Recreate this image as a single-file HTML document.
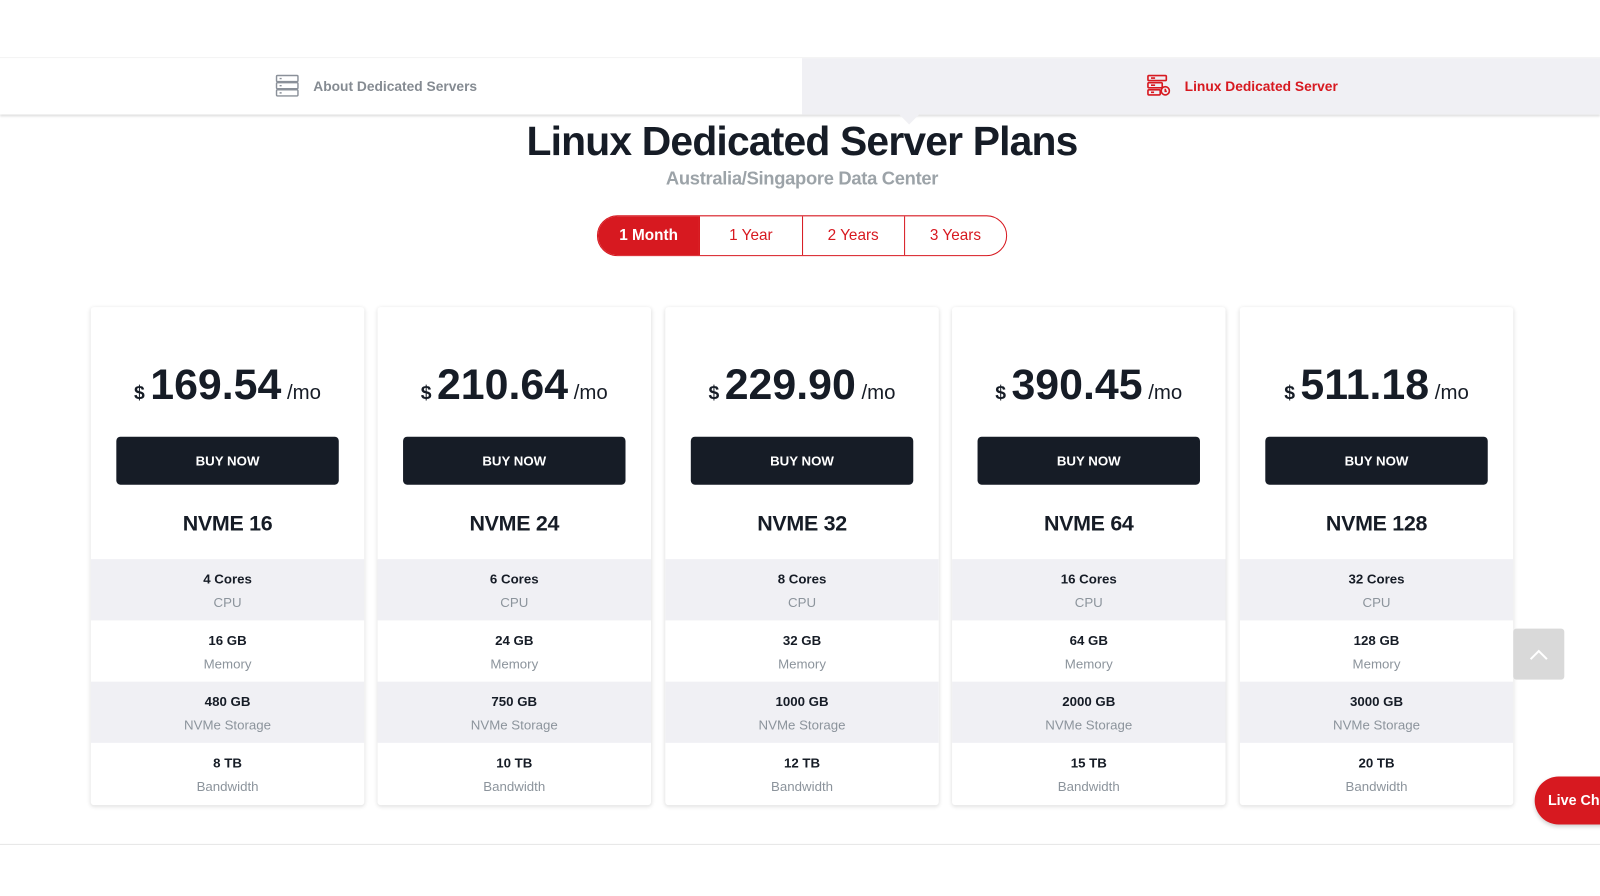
<!DOCTYPE html>
<html><head><meta charset="utf-8">
<style>
*{margin:0;padding:0;box-sizing:border-box}
html,body{width:1600px;height:896px;overflow:hidden;background:#fff}
body{font-family:"Liberation Sans",sans-serif;color:#161c26}
#w{position:absolute;left:0;top:0;width:1568px;height:878px;transform:scale(1.0204);transform-origin:0 0}
.tabs{position:absolute;top:56px;left:0;width:1568px;height:56px;border-top:1px solid #f2f2f2;box-shadow:0 2px 2px rgba(0,0,0,.12)}
.tl{position:absolute;left:0;top:0;width:786px;height:55px;background:#fff}
.tr{position:absolute;left:786px;top:0;width:782px;height:55px;background:#f0f0f4}
.tab{position:absolute;top:16px;font-size:13.5px;font-weight:bold;display:flex;align-items:center;gap:14px}
.arrow{position:absolute;left:880px;top:111px;width:0;height:0;border-left:11px solid transparent;border-right:11px solid transparent;border-top:11px solid #f0f0f4}
h1{position:absolute;top:117px;left:0;width:1572px;text-align:center;font-size:40px;font-weight:bold;letter-spacing:-.8px}
.sub{position:absolute;top:165px;left:0;width:1572px;text-align:center;font-size:18px;font-weight:bold;color:#9ca3a8;letter-spacing:-.3px}
.sw{position:absolute;left:585px;top:211px;width:402px;height:40px;border:1px solid #d71920;border-radius:20px;display:flex;overflow:hidden}
.sw div{flex:1;text-align:center;line-height:38px;font-size:15px;color:#d71920;border-left:1px solid #d71920}
.sw div:first-child{border-left:none;background:#d71920;color:#fff;font-weight:bold}
.card{position:absolute;top:301px;width:268px;height:488px;background:#fff;box-shadow:0 1px 4px rgba(0,0,0,.14);border-radius:3px;overflow:hidden;text-align:center}
.price{position:absolute;top:52px;left:0;width:100%;font-weight:bold;white-space:nowrap}
.price .d{font-size:19px}.price .n{font-size:42px}.price .m{font-size:20px;font-weight:normal}
.btn{position:absolute;top:127px;left:25px;width:218px;height:47px;background:#161c26;border-radius:4px;color:#fff;font-weight:bold;font-size:13px;line-height:47px}
.name{position:absolute;top:201px;width:100%;font-size:21px;font-weight:bold;letter-spacing:-.3px}
.row{position:absolute;left:0;width:100%;height:60px}
.row b{display:block;font-size:13px;padding-top:12px}
.row span{display:block;font-size:13px;color:#8c949c;padding-top:8px}
.g{background:#f0f0f4}
.up{position:absolute;left:1483px;top:616px;width:50px;height:50px;background:#d9d9d9;border-radius:3px}
.chat{position:absolute;left:1504px;top:761px;width:120px;height:47px;background:#d71920;border-radius:24px;color:#fff;font-weight:bold;font-size:14px;line-height:47px;padding-left:13px;box-shadow:0 2px 4px rgba(0,0,0,.2)}
.bl{position:absolute;top:827px;left:0;width:1568px;height:1px;background:#e6e6e6}
</style></head><body><div id="w">
<div class="tabs">
<div class="tl"><div class="tab" style="left:270px;color:#858b92">
<svg width="23" height="22" viewBox="0 0 23 22" fill="none" stroke="#8a9099" stroke-width="1.4"><rect x="1" y="1" width="21" height="6" rx="1"/><rect x="1" y="8" width="21" height="6" rx="1"/><rect x="1" y="15" width="21" height="6" rx="1"/><path d="M4 4h2M4 11h2M4 18h2"/></svg>About Dedicated Servers</div></div>
<div class="tr"><div class="tab" style="left:338px;color:#d71920;gap:14px">
<svg width="23" height="22" viewBox="0 0 23 22" fill="none" stroke="#d71920" stroke-width="1.6"><rect x="1" y="1" width="18" height="5" rx="1"/><rect x="1" y="8" width="14" height="5" rx="1"/><rect x="1" y="15" width="12" height="5" rx="1"/><circle cx="18" cy="16" r="4"/><path d="M4 3.5h4M4 10.5h4M4 17.5h3M18 14v2.5h1.5"/></svg>Linux Dedicated Server</div></div>
</div>
<div class="arrow"></div>
<h1>Linux Dedicated Server Plans</h1>
<div class="sub">Australia/Singapore Data Center</div>
<div class="sw"><div>1 Month</div><div>1 Year</div><div>2 Years</div><div>3 Years</div></div>

<div class="card" style="left:89px"><div class="price"><span class="d">$ </span><span class="n">169.54</span><span class="m"> /mo</span></div><div class="btn">BUY NOW</div><div class="name">NVME 16</div>
<div class="row g" style="top:247px"><b>4 Cores</b><span>CPU</span></div><div class="row" style="top:307px"><b>16 GB</b><span>Memory</span></div><div class="row g" style="top:367px"><b>480 GB</b><span>NVMe Storage</span></div><div class="row" style="top:427px"><b>8 TB</b><span>Bandwidth</span></div></div>

<div class="card" style="left:370px"><div class="price"><span class="d">$ </span><span class="n">210.64</span><span class="m"> /mo</span></div><div class="btn">BUY NOW</div><div class="name">NVME 24</div>
<div class="row g" style="top:247px"><b>6 Cores</b><span>CPU</span></div><div class="row" style="top:307px"><b>24 GB</b><span>Memory</span></div><div class="row g" style="top:367px"><b>750 GB</b><span>NVMe Storage</span></div><div class="row" style="top:427px"><b>10 TB</b><span>Bandwidth</span></div></div>

<div class="card" style="left:652px"><div class="price"><span class="d">$ </span><span class="n">229.90</span><span class="m"> /mo</span></div><div class="btn">BUY NOW</div><div class="name">NVME 32</div>
<div class="row g" style="top:247px"><b>8 Cores</b><span>CPU</span></div><div class="row" style="top:307px"><b>32 GB</b><span>Memory</span></div><div class="row g" style="top:367px"><b>1000 GB</b><span>NVMe Storage</span></div><div class="row" style="top:427px"><b>12 TB</b><span>Bandwidth</span></div></div>

<div class="card" style="left:933px"><div class="price"><span class="d">$ </span><span class="n">390.45</span><span class="m"> /mo</span></div><div class="btn">BUY NOW</div><div class="name">NVME 64</div>
<div class="row g" style="top:247px"><b>16 Cores</b><span>CPU</span></div><div class="row" style="top:307px"><b>64 GB</b><span>Memory</span></div><div class="row g" style="top:367px"><b>2000 GB</b><span>NVMe Storage</span></div><div class="row" style="top:427px"><b>15 TB</b><span>Bandwidth</span></div></div>

<div class="card" style="left:1215px"><div class="price"><span class="d">$ </span><span class="n">511.18</span><span class="m"> /mo</span></div><div class="btn">BUY NOW</div><div class="name">NVME 128</div>
<div class="row g" style="top:247px"><b>32 Cores</b><span>CPU</span></div><div class="row" style="top:307px"><b>128 GB</b><span>Memory</span></div><div class="row g" style="top:367px"><b>3000 GB</b><span>NVMe Storage</span></div><div class="row" style="top:427px"><b>20 TB</b><span>Bandwidth</span></div></div>

<div class="up"><svg width="50" height="50" viewBox="0 0 50 50" fill="none" stroke="#fff" stroke-width="2"><path d="M17 30l8-8 8 8"/></svg></div>
<div class="chat">Live Chat</div>
<div class="bl"></div>
</div></body></html>
